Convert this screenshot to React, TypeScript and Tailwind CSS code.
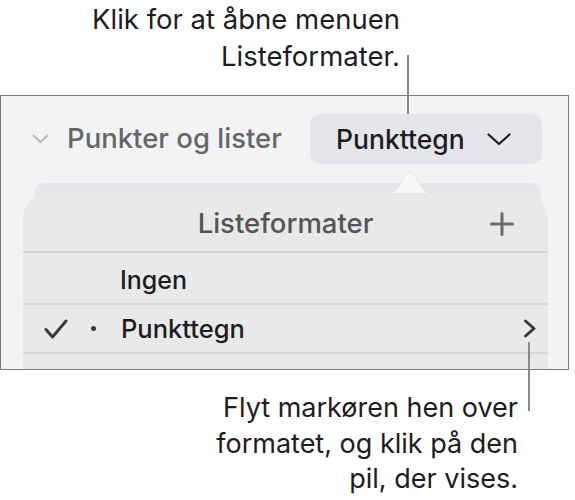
import React from "react";

const font = { fontFamily: "Inter, 'Noto Sans', sans-serif" };

export default function App() {
  return (
    <div className="relative w-[575px] h-[500px] bg-white overflow-hidden text-[#1d1d1f]" style={font}>
      {/* top annotation */}
      <div className="pr-[175px] pt-[1px] text-right text-[27.5px] leading-[37px] h-[95px]">
        <div>Klik for at åbne menuen</div>
        <div>Listeformater.</div>
      </div>
      {/* callout line top */}
      <div className="absolute left-[407px] top-[55px] w-[2px] h-[59px] bg-[#8a8a8a] z-10" />

      {/* panel */}
      <div className="relative w-[569px] h-[275px] border border-[#7d7d7d] bg-[#f2f3f5] overflow-hidden">
        <div className="flex items-center h-[50px] mt-[18px]">
          <svg width="17" height="10" viewBox="0 0 17 10" className="ml-[31px]">
            <path d="M1.5 1.5 L8.5 8 L15.5 1.5" fill="none" stroke="#b8b8b8" strokeWidth="2" strokeLinecap="round" strokeLinejoin="round" />
          </svg>
          <div className="ml-[18px] text-[27.5px] font-medium text-[#666668] leading-none">Punkter og lister</div>
          <div className="ml-auto mr-[26px] w-[232px] h-[50px] rounded-[10px] bg-[#e4e6e9] flex items-center pl-[26px]">
            <span className="text-[26.5px] font-medium text-[#1d1d1f] leading-none">Punkttegn</span>
            <svg width="24" height="13" viewBox="0 0 24 13" className="ml-[22px]">
              <path d="M1.5 1.5 L12 11 L22.5 1.5" fill="none" stroke="#1d1d1f" strokeWidth="2.2" strokeLinecap="round" strokeLinejoin="round" />
            </svg>
          </div>
        </div>

        {/* back card */}
        <div className="absolute left-[33px] top-[87px] w-[507px] h-[200px] rounded-[10px] bg-[#e5e7ea]" />
        {/* arrow */}
        <svg className="absolute left-[378px] top-[74px]" width="62" height="26" viewBox="0 0 62 26">
          <path d="M0 25.5 C13 25.5 20 20 25.5 6 C27.5 1 34.5 1 36.5 6 C42 20 49 25.5 62 25.5" fill="#f8f8f9" stroke="#e6e7e9" strokeWidth="1" />
        </svg>
        {/* front menu */}
        <div className="absolute left-[22px] top-[97px] w-[525px] h-[200px] rounded-t-[26px] bg-[#e9e9e9] flex flex-col">
          <div className="relative h-[58px] flex items-center justify-center">
            <span className="mt-[4px] text-[27.5px] font-medium text-[#555557] leading-none">Listeformater</span>
            <svg className="absolute right-[34px] top-[19px]" width="24" height="24" viewBox="0 0 24 24">
              <path d="M12 1.5 V22.5 M1.5 12 H22.5" stroke="#6a6a6c" strokeWidth="3" strokeLinecap="round" />
            </svg>
          </div>
          <div className="h-[2px] bg-[#d7d7d8]" />
          <div className="h-[50px] flex items-center pl-[97px]">
            <span className="mt-[4px] text-[25px] font-medium text-[#1d1d1f] leading-none">Ingen</span>
          </div>
          <div className="h-[2px] bg-[#d7d7d8]" />
          <div className="h-[47px] flex items-center relative">
            <svg className="ml-[21px]" width="24" height="20" viewBox="0 0 24 20">
              <path d="M2 10.5 L8.5 18 L22 2" fill="none" stroke="#3a3a3c" strokeWidth="3" strokeLinecap="round" strokeLinejoin="round" />
            </svg>
            <div className="ml-[23px] w-[5px] h-[5px] rounded-full bg-[#3a3a3c]" />
            <span className="ml-[25px] text-[25.5px] font-medium text-[#1d1d1f] leading-none">Punkttegn</span>
            <svg className="absolute left-[500px] top-[14px]" width="14" height="19" viewBox="0 0 14 19">
              <path d="M2.5 2 L11 9.5 L2.5 17" fill="none" stroke="#3a3a3c" strokeWidth="3" strokeLinecap="round" strokeLinejoin="round" />
            </svg>
          </div>
          <div className="h-[2px] bg-[#d7d7d8]" />
        </div>
      </div>

      {/* callout line bottom */}
      <div className="absolute left-[528px] top-[342px] w-[2px] h-[69px] bg-[#8a8a8a] z-10" />

      {/* bottom annotation */}
      <div className="pr-[57px] pt-[20px] text-right text-[27px] leading-[35.5px]">
        <div>Flyt markøren hen over</div>
        <div>formatet, og klik på den</div>
        <div>pil, der vises.</div>
      </div>
    </div>
  );
}
